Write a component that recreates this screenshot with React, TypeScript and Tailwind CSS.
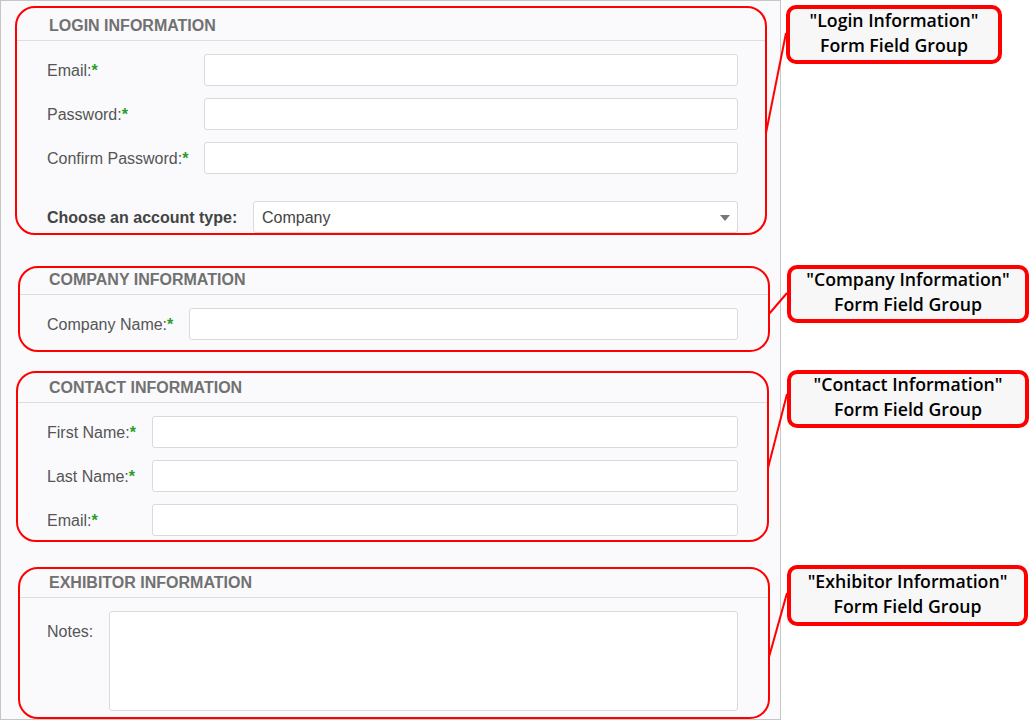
import React from "react";

type Field = { label: string; required?: boolean };

function Req() {
  return <span className="font-bold text-[#2a9d2a]">*</span>;
}

function TextRow({ label, required, labelWidth }: Field & { labelWidth: string }) {
  return (
    <div className="flex items-center">
      <label className={`${labelWidth} shrink-0 pt-[2px] text-[16px] text-[#555]`}>
        {label}
        {required && <Req />}
      </label>
      <input className="h-[32px] flex-1 rounded-[3px] border border-[#dadada] bg-white px-2 outline-none" />
    </div>
  );
}

function Header({ title, className }: { title: string; className: string }) {
  return (
    <div className={`border-b border-[#dedede] ${className}`}>
      <h3 className="text-[16px] font-bold leading-[18px] text-[#717171]">{title}</h3>
    </div>
  );
}

const callouts = [
  { title: '"Login Information"', className: "mt-[5px] ml-[5px] h-[59px] w-[216px]" },
  { title: '"Company Information"', className: "mt-[201px] ml-[6px] h-[58px] w-[242px]" },
  { title: '"Contact Information"', className: "mt-[47px] ml-[6px] h-[58px] w-[242px]" },
  { title: '"Exhibitor Information"', className: "mt-[137px] ml-[6px] h-[61px] w-[241px]" },
];

export default function App() {
  return (
    <div className="relative flex h-[722px] w-[1031px] overflow-hidden bg-white font-['Liberation_Sans',Arial,sans-serif]">
      {/* form panel */}
      <div className="flex h-[720px] w-[781px] shrink-0 flex-col border border-[#c6c6c6] bg-[#fafafc]">
        {/* login */}
        <section className="ml-[14px] mt-[5px] h-[230px] w-[752px] rounded-[20px] border-2 border-[#ff0000]">
          <Header title="LOGIN INFORMATION" className="h-[33px] pl-[32px] pt-[9px]" />
          <div className="flex flex-col gap-[12px] pl-[30px] pr-[27px] pt-[13px]">
            <TextRow label="Email:" required labelWidth="w-[157px]" />
            <TextRow label="Password:" required labelWidth="w-[157px]" />
            <TextRow label="Confirm Password:" required labelWidth="w-[157px]" />
          </div>
          <div className="mt-[27px] flex items-center pl-[30px] pr-[27px]">
            <label className="w-[206px] shrink-0 pt-[2px] text-[16px] font-bold text-[#444]">
              Choose an account type:
            </label>
            <div className="relative flex h-[32px] flex-1 items-center rounded-[3px] border border-[#dadada] bg-white pl-[8px] pt-[2px] text-[16px] text-[#444]">
              Company
              <span className="absolute right-[7px] top-[13px] h-0 w-0 border-x-[5px] border-t-[6px] border-x-transparent border-t-[#777]" />
            </div>
          </div>
        </section>

        {/* company */}
        <section className="ml-[17px] mt-[31px] h-[86px] w-[752px] rounded-[20px] border-2 border-[#ff0000]">
          <Header title="COMPANY INFORMATION" className="h-[27px] pl-[29px] pt-[3px]" />
          <div className="pl-[27px] pr-[30px] pt-[13px]">
            <TextRow label="Company Name:" required labelWidth="w-[142px]" />
          </div>
        </section>

        {/* contact */}
        <section className="ml-[15px] mt-[19px] h-[172px] w-[753px] rounded-[20px] border-2 border-[#ff0000]">
          <Header title="CONTACT INFORMATION" className="h-[30px] pl-[31px] pt-[6px]" />
          <div className="flex flex-col gap-[12px] pl-[29px] pr-[29px] pt-[13px]">
            <TextRow label="First Name:" required labelWidth="w-[105px]" />
            <TextRow label="Last Name:" required labelWidth="w-[105px]" />
            <TextRow label="Email:" required labelWidth="w-[105px]" />
          </div>
        </section>

        {/* exhibitor */}
        <section className="ml-[17px] mt-[25px] h-[153px] w-[752px] rounded-[20px] border-2 border-[#ff0000]">
          <Header title="EXHIBITOR INFORMATION" className="h-[29px] pl-[29px] pt-[5px]" />
          <div className="flex pl-[27px] pr-[30px] pt-[13px]">
            <label className="w-[62px] shrink-0 pt-[9px] text-[16px] text-[#555]">Notes:</label>
            <textarea className="h-[100px] flex-1 resize-none rounded-[3px] border border-[#dadada] bg-white outline-none" />
          </div>
        </section>
      </div>

      {/* annotation callouts */}
      <div className="flex flex-col">
        {callouts.map((c) => (
          <div
            key={c.title}
            className={`${c.className} flex flex-col items-center justify-center rounded-[10px] border-4 border-[#ff0000] bg-[#f7f7f7] pb-[4px] font-['Open_Sans',sans-serif] text-[17.7px] font-semibold leading-[25px] text-black`}
          >
            <span>{c.title}</span>
            <span>Form Field Group</span>
          </div>
        ))}
      </div>

      {/* connector lines */}
      <svg className="pointer-events-none absolute inset-0" width="1031" height="722">
        <g stroke="#ff0000" strokeWidth="2">
          <line x1="766" y1="133" x2="786" y2="33" />
          <line x1="769" y1="314" x2="787" y2="293" />
          <line x1="768" y1="468" x2="787" y2="394" />
          <line x1="769" y1="657" x2="787" y2="593" />
        </g>
      </svg>
    </div>
  );
}
